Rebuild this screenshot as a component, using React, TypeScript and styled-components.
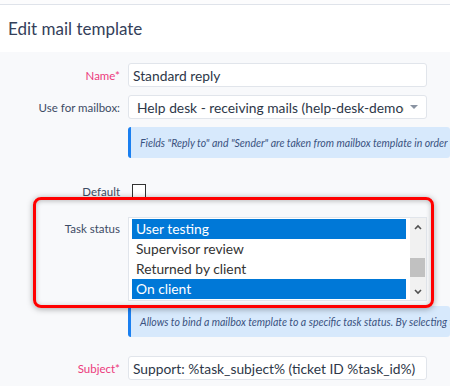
import styled, { createGlobalStyle } from "styled-components";

const Global = createGlobalStyle`
  html, body { margin: 0; padding: 0; }
  body {
    background: #f8f9fb;
    font-family: Lato, "Open Sans", sans-serif;
    color: #3c4b64;
    overflow: hidden;
  }
`;

const Page = styled.div`
  width: 450px;
  height: 386px;
  position: relative;
  overflow: hidden;
  border-top: 4px solid #fcfcfd;
`;

const Header = styled.div`
  height: 47px;
  background: #fff;
  border-top: 1px solid #dfe3ea;
  display: flex;
  align-items: center;
  padding: 0 8px;
  font-size: 17px;
  color: #34405a;
`;

const Form = styled.div`
  padding-top: 11px;
  display: flex;
  flex-direction: column;
`;

const Row = styled.div<{ $mt?: number; $align?: string }>`
  display: flex;
  align-items: ${(p) => p.$align || "center"};
  margin-top: ${(p) => p.$mt ?? 0}px;
`;

const Label = styled.div<{ $req?: boolean; $pt?: number }>`
  width: 120px;
  flex: none;
  text-align: right;
  padding-right: 8px;
  padding-top: ${(p) => p.$pt ?? 0}px;
  font-size: 11.5px;
  color: ${(p) => (p.$req ? "#ec3b7c" : "#3c4b64")};
`;

const Field = styled.div`
  width: 299px;
  flex: none;
`;

const Input = styled.div`
  height: 24px;
  box-sizing: border-box;
  border: 1px solid #e1e5eb;
  border-radius: 3px;
  background: #fff;
  display: flex;
  align-items: center;
  padding: 0 4px;
  font-size: 13.8px;
  color: #2d3748;
  white-space: nowrap;
  overflow: hidden;
`;

const Select = styled(Input)`
  padding: 0 8px;
`;

const SelectText = styled.span`
  flex: 1;
  overflow: hidden;
  white-space: nowrap;
`;

const Caret = styled.span`
  width: 0;
  height: 0;
  margin-left: 6px;
  border-left: 4px solid transparent;
  border-right: 4px solid transparent;
  border-top: 4px solid #8a93a2;
`;

const Info = styled.div`
  margin-left: 128px;
  width: 360px;
  height: 31px;
  box-sizing: border-box;
  background: #d7e9fc;
  border-left: 3px solid #1a7ff0;
  border-radius: 3px;
  display: flex;
  align-items: center;
  padding-left: 9px;
  font-size: 10.5px;
  font-style: italic;
  color: #3a5280;
  white-space: nowrap;
  overflow: hidden;
`;

const Check = styled.span`
  display: block;
  width: 12px;
  height: 12px;
  margin-left: 4px;
  border: 1px solid #333;
  background: #fff;
`;

const ListBox = styled.div`
  width: 299px;
  height: 84px;
  box-sizing: border-box;
  border: 1px solid #e1e5eb;
  background: #fff;
  display: flex;
  padding: 1px 0 0 3px;
`;

const Options = styled.div`
  flex: 1;
  display: flex;
  flex-direction: column;
  padding-right: 4px;
`;

const Option = styled.div<{ $sel?: boolean }>`
  height: 20px;
  line-height: 20px;
  padding-left: 4px;
  font-size: 13.8px;
  background: ${(p) => (p.$sel ? "#0078d7" : "transparent")};
  color: ${(p) => (p.$sel ? "#fff" : "#333")};
`;

const Scroll = styled.div`
  width: 16px;
  margin-top: -1px;
  background: #f1f1f1;
  display: flex;
  flex-direction: column;
  align-items: center;
`;

const Arrow = styled.div`
  height: 17px;
  display: flex;
  align-items: center;
  justify-content: center;
`;

const Track = styled.div`
  flex: 1;
  width: 100%;
  position: relative;
`;

const Thumb = styled.div`
  position: absolute;
  left: 0;
  right: 1px;
  background: #c1c1c1;
`;

const Highlight = styled.div`
  position: absolute;
  left: 33px;
  top: 193px;
  width: 401px;
  height: 111px;
  box-sizing: border-box;
  border: 3px solid #ff0000;
  border-radius: 8px;
  box-shadow: 0 1px 6px rgba(0, 0, 0, 0.35), inset 0 1px 5px rgba(0, 0, 0, 0.25);
  pointer-events: none;
`;

const Chevron = ({ up }: { up?: boolean }) => (
  <svg width="8" height="6" viewBox="0 0 8 6">
    <path
      d={up ? "M1 5 L4 2 L7 5" : "M1 1 L4 4 L7 1"}
      stroke="#505050"
      strokeWidth="1.6"
      fill="none"
    />
  </svg>
);

export default function App() {
  return (
    <Page>
      <Global />
      <Header>Edit mail template</Header>
      <Form>
        <Row>
          <Label $req>Name*</Label>
          <Field>
            <Input>Standard reply</Input>
          </Field>
        </Row>
        <Row $mt={8}>
          <Label>Use for mailbox:</Label>
          <Field>
            <Select>
              <SelectText>Help desk - receiving mails (help-desk-demo@example.com)</SelectText>
              <Caret />
            </Select>
          </Field>
        </Row>
        <Row $mt={8}>
          <Info>Fields "Reply to" and "Sender" are taken from mailbox template in order to</Info>
        </Row>
        <Row $mt={26}>
          <Label>Default</Label>
          <Check />
        </Row>
        <Row $mt={19} $align="flex-start">
          <Label $pt={5}>Task status</Label>
          <ListBox>
            <Options>
              <Option $sel>User testing</Option>
              <Option>Supervisor review</Option>
              <Option>Returned by client</Option>
              <Option $sel>On client</Option>
            </Options>
            <Scroll>
              <Arrow>
                <Chevron up />
              </Arrow>
              <Track>
                <Thumb style={{ top: 23, height: 19 }} />
              </Track>
              <Arrow>
                <Chevron />
              </Arrow>
            </Scroll>
          </ListBox>
        </Row>
        <Row $mt={5}>
          <Info>Allows to bind a mailbox template to a specific task status. By selecting this</Info>
        </Row>
        <Row $mt={19}>
          <Label $req>Subject*</Label>
          <Field>
            <Input>Support: %task_subject% (ticket ID %task_id%)</Input>
          </Field>
        </Row>
      </Form>
      <Highlight />
    </Page>
  );
}
